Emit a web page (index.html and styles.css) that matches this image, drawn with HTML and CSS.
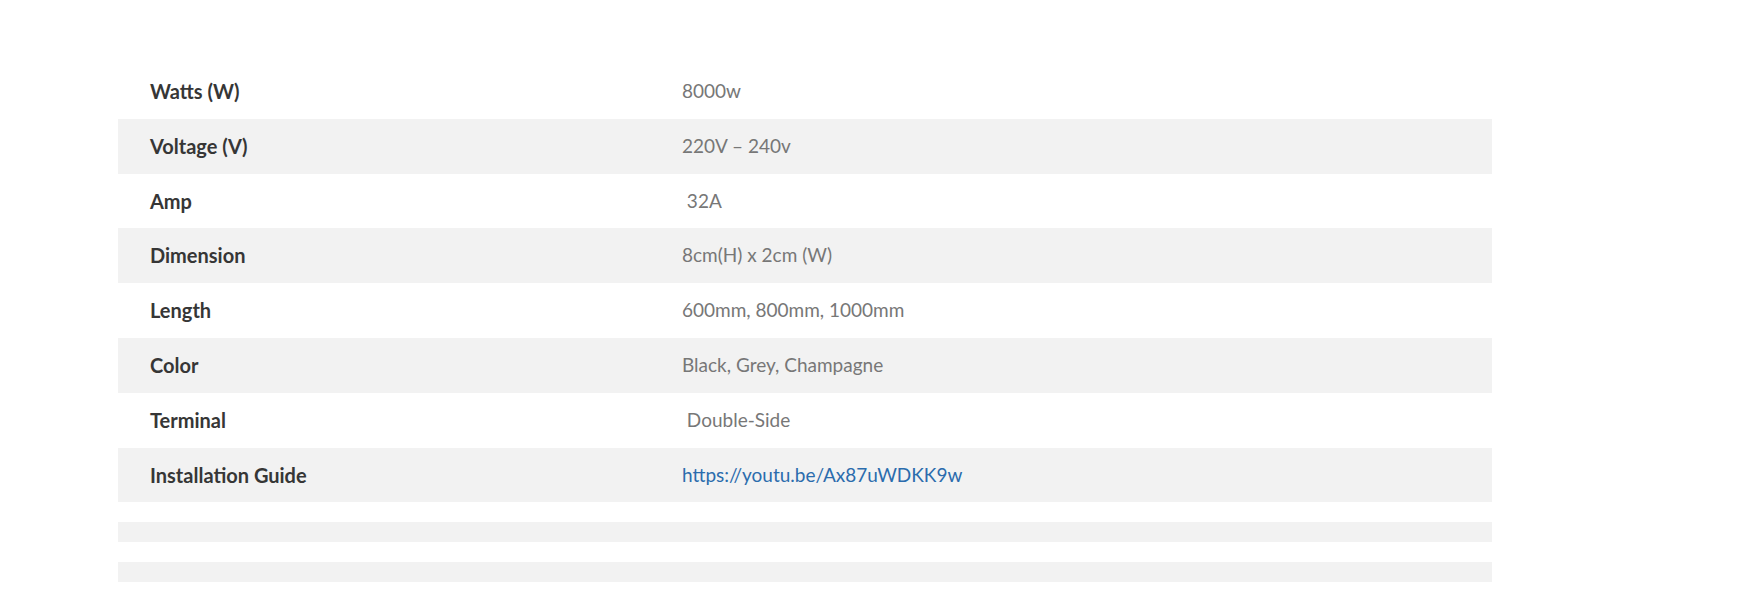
FILE: index.html
```html
<!DOCTYPE html>
<html lang="en">
<head>
<meta charset="utf-8">
<title>Specifications</title>
<link rel="stylesheet" href="styles.css">
</head>
<body>
<div class="page">
  <table class="specs">
    <colgroup><col class="col-label"><col class="col-value"></colgroup>
    <tbody>
      <tr><th>Watts (W)</th><td>8000w</td></tr>
      <tr><th>Voltage (V)</th><td>220V – 240v</td></tr>
      <tr><th>Amp</th><td>&nbsp;32A</td></tr>
      <tr><th>Dimension</th><td>8cm(H) x 2cm (W)</td></tr>
      <tr><th>Length</th><td>600mm, 800mm, 1000mm</td></tr>
      <tr><th>Color</th><td>Black, Grey, Champagne</td></tr>
      <tr><th>Terminal</th><td>&nbsp;Double-Side</td></tr>
      <tr><th>Installation Guide</th><td><a href="#">https://youtu.be/Ax87uWDKK9w</a></td></tr>
      <tr class="empty"><th></th><td></td></tr>
      <tr class="empty"><th></th><td></td></tr>
      <tr class="empty"><th></th><td></td></tr>
      <tr class="empty"><th></th><td></td></tr>
    </tbody>
  </table>
</div>
</body>
</html>
```

FILE: styles.css
```css
html, body {
  margin: 0;
  padding: 0;
  background: #ffffff;
}
.page {
  padding: 64px 0 0 118px;
}
.specs {
  width: 1374px;
  border-collapse: collapse;
  border-spacing: 0;
  font-family: Lato, "Noto Sans", sans-serif;
}
.col-label { width: 532px; }
.specs th,
.specs td {
  padding: 10px 32px;
  height: 34.8px;
  line-height: 34.8px;
  text-align: left;
  vertical-align: middle;
}
.specs th {
  font-size: 20px;
  font-weight: 700;
  color: #363636;
}
.specs td {
  font-size: 19px;
  font-weight: 400;
  color: #777777;
}
.specs tr:nth-child(even) {
  background: #f2f2f2;
}
.specs tr.empty th,
.specs tr.empty td {
  line-height: 0;
  height: 0;
  padding-top: 10px;
  padding-bottom: 10px;
}
.specs a {
  color: #2b6cad;
  text-decoration: none;
}
```
